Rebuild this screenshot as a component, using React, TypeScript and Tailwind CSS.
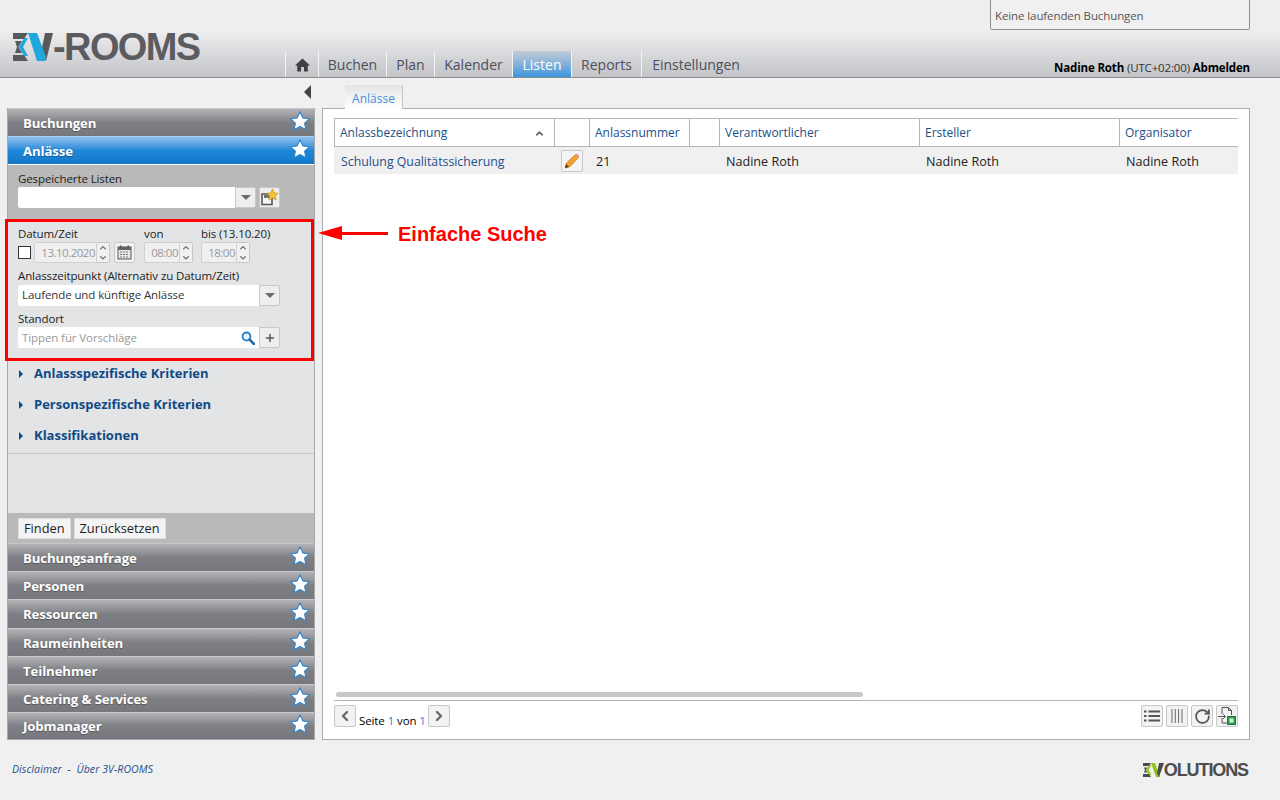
import React from 'react';
import { Plus, ChevronLeft, ChevronRight, ChevronUp, ChevronDown, RotateCw } from 'lucide-react';

const navItems = [
  { label: 'Buchen', w: 'w-[68px]' },
  { label: 'Plan', w: 'w-[48px]' },
  { label: 'Kalender', w: 'w-[78px]' },
  { label: 'Listen', w: 'w-[59px]' },
  { label: 'Reports', w: 'w-[70px]' },
  { label: 'Einstellungen', w: 'w-[108px]' },
];
const lowerPanels = [
  { title: 'Buchungsanfrage', h: 'h-[28px]' },
  { title: 'Personen', h: 'h-[28px]' },
  { title: 'Ressourcen', h: 'h-[29px]' },
  { title: 'Raumeinheiten', h: 'h-[28px]' },
  { title: 'Teilnehmer', h: 'h-[28px]' },
  { title: 'Catering & Services', h: 'h-[28px]' },
  { title: 'Jobmanager', h: 'h-[27px]' },
];
const criteria = ['Anlassspezifische Kriterien', 'Personspezifische Kriterien', 'Klassifikationen'];
const columns = [
  { label: 'Anlassbezeichnung', w: 'w-[220px]' },
  { label: '', w: 'w-[35px]' },
  { label: 'Anlassnummer', w: 'w-[100px]' },
  { label: '', w: 'w-[30px]' },
  { label: 'Verantwortlicher', w: 'w-[200px]' },
  { label: 'Ersteller', w: 'w-[200px]' },
  { label: 'Organisator', w: 'w-[119px]' },
];

function Star() {
  return (
    <svg width="20" height="20" viewBox="0 0 20 20" className="shrink-0 -mt-[4px]">
      <polygon
        points="10,0.8 12.9,6.9 19.4,7.7 14.6,12.2 15.9,18.8 10,15.6 4.1,18.8 5.4,12.2 0.6,7.7 7.1,6.9"
        fill="#ffffff"
        stroke="#2f86cc"
        strokeWidth="1.1"
        strokeLinejoin="round"
      />
    </svg>
  );
}

function PanelHeader({ title, active, h = 'h-[28px]' }: { title: string; active?: boolean; h?: string }) {
  return (
    <div
      className={`${h} flex items-center justify-between pl-[15px] pr-[4px] border-t font-bold text-[13.2px] text-white ${
        active
          ? 'border-[#a8d0f0] bg-gradient-to-b from-[#8cc0ee] via-[#1e88d8] to-[#1478c8]'
          : 'border-[#c8c8cc] bg-gradient-to-b from-[#b4b4b8] via-[#7e7f84] to-[#77787d]'
      }`}
    >
      <span className="mt-[2px] [text-shadow:0_1px_1px_rgba(0,0,0,0.3)]">{title}</span>
      <Star />
    </div>
  );
}

function Caret() {
  return <span className="w-0 h-0 border-x-[5px] border-x-transparent border-t-[5px] border-t-[#6b6b6b]" />;
}

function SquareButton({ children, className = 'w-[22px] h-[22px]' }: { children?: React.ReactNode; className?: string }) {
  return (
    <div className={`flex items-center justify-center bg-[#f2f2f2] border border-[#c8c8c8] rounded-[2px] shrink-0 ${className}`}>
      {children}
    </div>
  );
}

function TimeField({ value, inputWidth }: { value: string; inputWidth: string }) {
  return (
    <div className="flex h-[21px]">
      <div className={`${inputWidth} bg-[#f0f0f1] border border-[#d0d0d0] rounded-l-[2px] text-right pr-[1px] text-[#999] text-[11.5px] tracking-[-0.5px] leading-[19px]`}>
        {value}
      </div>
      <div className="w-[13px] bg-[#f0f0f1] border border-l-0 border-[#c8c8c8] rounded-r-[2px] flex flex-col items-center justify-center text-[#666]">
        <ChevronUp size={10} strokeWidth={3} />
        <ChevronDown size={10} strokeWidth={3} />
      </div>
    </div>
  );
}

function Logo() {
  return (
    <div className="flex items-center h-[28px]">
      <svg width="40" height="28" viewBox="0 0 40 28" className="shrink-0">
        <polygon points="0,0 15,0 11,6 0,6" fill="#58595b" />
        <polygon points="0,22 11,22 15,28 0,28" fill="#58595b" />
        <polygon points="2,8 9,8 5.5,14 9,20 2,20 4,14" fill="#58595b" />
        <polygon points="11,5 15,5 10,14 15,23 11,23 6,14" fill="#1fa7e0" />
        <polygon points="32,0 40,0 33,28 28,20" fill="#58595b" />
        <polygon points="15,0 24,0 33,24 32,28 24,28" fill="#1fa7e0" />
      </svg>
      <span className="font-['Liberation_Sans',sans-serif] font-bold text-[38px] leading-none tracking-[-1.6px] text-[#5b5c60]">-ROOMS</span>
    </div>
  );
}

export default function App() {
  return (
    <div className="relative w-[1280px] h-[800px] overflow-hidden bg-[#f0f0f0] font-['Open_Sans',sans-serif] text-[11.5px] tracking-[-0.1px] text-[#222]">
      {/* running bookings box */}
      <div className="absolute left-[990px] top-0 w-[260px] h-[30px] bg-[#f0f0f0] border border-t-0 border-[#909090] rounded-b-[2px] pl-1 pt-[8px] text-[#555] leading-4 z-10">
        Keine laufenden Buchungen
      </div>

      {/* Header */}
      <header className="h-[78px] border-b border-[#8c8c8c] bg-gradient-to-b from-[#eeeef0] via-[#eeeef0] via-40% to-[#c3c4c8] flex items-end justify-between pr-[30px]">
        <div className="flex items-end h-full">
          <div className="w-[285px] pl-[13px] pb-[16px]">
            <Logo />
          </div>
          <nav className="flex h-[26px] text-[14px] tracking-normal text-[#4c4f5c]">
            <div className="w-[34px] border-x border-[#f4f4f4] flex items-center justify-center">
              <svg width="15" height="14" viewBox="0 0 15 14" className="mt-[2px]">
                <path d="M7.5 0.5 L15 7.5 H12.8 V13.5 H9 V9 H6 V13.5 H2.2 V7.5 H0 Z" fill="#404040" />
              </svg>
            </div>
            {navItems.map((item) => (
              <div
                key={item.label}
                className={`${item.w} pt-[1px] flex items-center justify-center ${item.label === 'Einstellungen' ? '' : 'border-r border-[#f4f4f4]'} ${
                  item.label === 'Listen' ? 'bg-gradient-to-b from-[#c2ccd6] to-[#3a94dc] text-white' : ''
                }`}
              >
                {item.label}
              </div>
            ))}
          </nav>
        </div>
        <div className="pb-[1px] text-[11.5px] tracking-[-0.15px] leading-[16px] text-black whitespace-nowrap">
          <b>Nadine Roth</b> <span className="text-[#333]">(UTC+02:00)</span> <b>Abmelden</b>
        </div>
      </header>

      {/* Main */}
      <div className="flex pl-[7px] h-[662px]">
        {/* Sidebar */}
        <div className="w-[308px] pt-[30px] flex flex-col shrink-0">
          <div className="border border-[#a8a8a8] border-t-0 flex flex-col">
            <PanelHeader title="Buchungen" />
            <PanelHeader title="Anlässe" active />
            <div className="h-[55px] bg-[#b9b9b9] border-t border-white px-[10px] pt-[6px]">
              <div className="leading-[16px]">Gespeicherte Listen</div>
              <div className="flex h-[21px]">
                <div className="w-[217px] bg-white rounded-l-[2px]" />
                <div className="w-[21px] bg-[#eeeeee] border border-[#c8c8c8] flex items-center justify-center rounded-r-[2px]">
                  <Caret />
                </div>
                <div className="w-[21px] ml-[3px] bg-[#eeeeee] border border-[#c8c8c8] rounded-[2px] flex items-center justify-center">
                  <svg width="19" height="19" viewBox="0 0 19 19">
                    <path d="M2 6 H8 V9 H12 V16.5 H2 Z" fill="#f5f5f5" stroke="#555" strokeWidth="1.6" />
                    <rect x="4" y="6" width="3.5" height="4" fill="#777" />
                    <polygon points="12.5,1 14.3,4.8 18.3,5.3 15.4,8 16.2,12 12.5,10 8.8,12 9.6,8 6.7,5.3 10.7,4.8" fill="#f4c430" stroke="#b48a10" strokeWidth="0.6" />
                  </svg>
                </div>
              </div>
            </div>

            <div className="h-[294px] bg-[#e3e4e6] flex flex-col">
              <div className="px-[10px] pt-[7px] h-[235px] border-b border-[#c9c9cc]">
                <div className="flex leading-[16px]">
                  <span className="w-[126px]">Datum/Zeit</span>
                  <span className="w-[57px]">von</span>
                  <span>bis (13.10.20)</span>
                </div>
                <div className="flex items-center">
                  <div className="w-[13px] h-[13px] bg-white border border-[#333] mr-[3px] shrink-0" />
                  <TimeField value="13.10.2020" inputWidth="w-[63px]" />
                  <SquareButton className="ml-[4px] w-[21px] h-[21px]">
                    <svg width="15" height="15" viewBox="0 0 15 15">
                      <rect x="1" y="2" width="13" height="12" fill="#e8e8e8" stroke="#555" />
                      <rect x="1" y="2" width="13" height="3" fill="#666" />
                      <rect x="3" y="0.5" width="1.5" height="3" fill="#555" />
                      <rect x="10.5" y="0.5" width="1.5" height="3" fill="#555" />
                      <path d="M3 7 H12 M3 9.5 H12 M3 12 H12" stroke="#777" strokeWidth="1.2" strokeDasharray="2 1" />
                    </svg>
                  </SquareButton>
                  <div className="ml-[9px]"><TimeField value="08:00" inputWidth="w-[36px]" /></div>
                  <div className="ml-[8px]"><TimeField value="18:00" inputWidth="w-[36px]" /></div>
                </div>

                <div className="mt-[5px] leading-[16px]">Anlasszeitpunkt (Alternativ zu Datum/Zeit)</div>
                <div className="flex h-[21px] w-[262px] mt-[1px]">
                  <div className="flex-1 bg-white rounded-l-[2px] pl-1 text-[11.5px] leading-[20px] text-[#333]">Laufende und künftige Anlässe</div>
                  <div className="w-[21px] bg-[#eeeeee] border border-[#c8c8c8] rounded-r-[2px] flex items-center justify-center">
                    <Caret />
                  </div>
                </div>

                <div className="mt-[5px] leading-[16px]">Standort</div>
                <div className="flex h-[21px] w-[262px]">
                  <div className="flex-1 bg-white rounded-l-[2px] pl-1 pr-[4px] flex items-center justify-between text-[#999]">
                    Tippen für Vorschläge
                    <svg width="14" height="14" viewBox="0 0 14 14">
                      <circle cx="5.5" cy="5.5" r="4" fill="#e8f2fa" stroke="#2a7fc0" strokeWidth="1.8" />
                      <path d="M8.6 8.6 L13 13" stroke="#1f6aa8" strokeWidth="2.6" strokeLinecap="round" />
                    </svg>
                  </div>
                  <div className="w-[21px] bg-[#eeeeee] border border-[#c8c8c8] rounded-r-[2px] flex items-center justify-center text-[#555]">
                    <Plus size={12} strokeWidth={3} />
                  </div>
                </div>

                <div className="mt-[17px] flex flex-col gap-[13px]">
                  {criteria.map((c) => (
                    <div key={c} className="flex items-center h-[18px] pl-[1px] font-bold text-[13px] tracking-normal text-[#0f4a85]">
                      <span className="w-0 h-0 border-y-[4px] border-y-transparent border-l-[4px] border-l-[#0f4a85] mr-[11px] -mt-[1px]" />
                      {c}
                    </div>
                  ))}
                </div>
              </div>
            </div>

            <div className="h-[30px] bg-[#b9b9b9] px-[10px] pt-[1px] flex items-center gap-[3px] text-[12.8px] tracking-normal text-[#222]">
              <div className="h-[21px] px-[5px] bg-[#f4f4f4] border border-[#dedede] leading-[19px]">Finden</div>
              <div className="h-[21px] px-[5px] bg-[#f4f4f4] border border-[#dedede] leading-[19px]">Zurücksetzen</div>
            </div>
            {lowerPanels.map((p) => (
              <PanelHeader key={p.title} title={p.title} h={p.h} />
            ))}
          </div>
        </div>

        {/* Collapse arrow + content */}
        <div className="w-[935px] ml-[7px] flex flex-col">
          <div className="h-[30px] relative flex items-start pl-[23px] pt-[7px]">
            <span className="absolute left-[-18px] top-[7px] w-0 h-0 border-y-[7px] border-y-transparent border-r-[7px] border-r-[#444]" />
            <div className="w-[58px] h-[24px] bg-gradient-to-b from-[#e4e4e4] to-white border-r border-[#c4c4c4] text-center text-[12px] tracking-normal leading-[27px] text-[#3f8fdc] relative z-10">
              Anlässe
            </div>
          </div>
          <div className="w-[928px] h-[632px] bg-white border border-[#a9a9ae] px-[11px] pt-[9px] flex flex-col">
            {/* Table */}
            <div className="flex h-[29px] border-y border-l border-[#b4b4bc] text-[12px] tracking-normal text-[#1c4f8a] overflow-hidden">
              {columns.map((col, i) => (
                <div key={i} className={`${col.w} shrink-0 h-full pt-[1px] border-r border-[#b4b4bc] last:border-r-0 pl-[5px] flex items-center justify-between pr-[9px]`}>
                  {col.label}
                  {i === 0 && <ChevronUp size={11} strokeWidth={3.5} className="text-[#666]" />}
                </div>
              ))}
            </div>
            <div className="flex h-[27px] bg-[#f0f0f0] items-center text-[12.6px] tracking-normal text-[#222]">
              <div className="w-[220px] pl-[7px] pt-[3px] text-[12.3px] text-[#1c4f8a]">Schulung Qualitätssicherung</div>
              <div className="w-[35px] pl-[7px]">
                <div className="w-[22px] h-[22px] bg-[#f4f4f4] border border-[#c8c8c8] rounded-[2px] flex items-center justify-center">
                  <svg width="16" height="16" viewBox="0 0 16 16">
                    <polygon points="1,15 2.5,10 11.5,1.5 14.5,4.5 6,13.5" fill="#f2a32e" stroke="#c87a10" strokeWidth="0.8" />
                    <polygon points="11.5,1.5 13,0.5 15.5,3 14.5,4.5" fill="#e89ab0" />
                    <polygon points="1,15 2.2,11 5,14" fill="#5a4020" />
                  </svg>
                </div>
              </div>
              <div className="w-[130px] pl-[7px] pt-[3px]">21</div>
              <div className="w-[200px] pl-[7px] pt-[3px]">Nadine Roth</div>
              <div className="w-[200px] pl-[7px] pt-[3px]">Nadine Roth</div>
              <div className="pl-[7px] pt-[3px]">Nadine Roth</div>
            </div>

            <div className="flex-1 flex flex-col justify-end">
              <div className="h-[5px] w-[527px] ml-[2px] rounded-full bg-[#c8c8c8]" />
              <div className="h-[39px] mt-[3px] border-t border-[#b4b4bc] flex justify-between pt-[4px]">
                <div className="flex items-start text-black">
                  <SquareButton><ChevronLeft size={16} strokeWidth={3.5} className="text-[#666]" /></SquareButton>
                  <span className="ml-[3px] mr-[2px] mt-[8px] leading-[16px] whitespace-nowrap">
                    Seite <span className="text-[#2f7fd0]">1</span> von <span className="text-[#2f7fd0]">1</span>
                  </span>
                  <SquareButton><ChevronRight size={16} strokeWidth={3.5} className="text-[#666]" /></SquareButton>
                </div>
                <div className="flex gap-[3px]">
                  <SquareButton>
                    <svg width="16" height="12" viewBox="0 0 16 12">
                      <path d="M0 1.5 H2.5 M4.5 1.5 H16 M0 6 H2.5 M4.5 6 H16 M0 10.5 H2.5 M4.5 10.5 H16" stroke="#555" strokeWidth="2" />
                    </svg>
                  </SquareButton>
                  <SquareButton>
                    <svg width="12" height="14" viewBox="0 0 12 14">
                      <path d="M1 0 V14 M4.3 0 V14 M7.6 0 V14 M11 0 V14" stroke="#666" strokeWidth="1" />
                    </svg>
                  </SquareButton>
                  <SquareButton>
                    <RotateCw size={17} strokeWidth={2.5} className="text-[#555]" />
                  </SquareButton>
                  <SquareButton>
                    <svg width="18" height="18" viewBox="0 0 18 18">
                      <path d="M4 7 V0.5 H10.5 L13.5 3.5 V8 M10.5 0.5 V3.5 H13.5 M4 11 V16 H9" fill="none" stroke="#555" />
                      <path d="M0 9.5 H7 M5 7 L7.5 9.5 L5 12" fill="none" stroke="#555" />
                      <rect x="9.5" y="9.5" width="8" height="8" fill="#2e9e4f" stroke="#1d7a3a" />
                      <rect x="11.5" y="11.5" width="4" height="4" fill="#d8f0dc" />
                    </svg>
                  </SquareButton>
                </div>
              </div>
            </div>
          </div>
        </div>
      </div>

      {/* Footer */}
      <footer className="flex items-center justify-between pl-[12px] pr-[32px] h-[60px]">
        <div className="italic text-[10.5px] tracking-[0.1px] text-[#1c4f8a]">Disclaimer&nbsp; -&nbsp; Über 3V-ROOMS</div>
        <div className="flex items-center">
          <svg width="21" height="14" viewBox="0 0 21 14" className="shrink-0">
            <polygon points="0,0 8,0 6,3 0,3" fill="#4a4a4a" />
            <polygon points="0,11 6,11 8,14 0,14" fill="#4a4a4a" />
            <polygon points="1,4.5 4,4.5 3,7 4,9.5 1,9.5 2,7" fill="#4a4a4a" />
            <polygon points="6,2 8.5,2 5.5,7 8.5,12 6,12 3,7" fill="#8fc31f" />
            <polygon points="8,0 12,0 17,14 13,14" fill="#8fc31f" />
            <polygon points="16,0 21,0 16,14 14,10" fill="#4a4a4a" />
          </svg>
          <span className="font-['Liberation_Sans',sans-serif] font-bold text-[18px] leading-none tracking-[-1.1px] text-[#4d4d4f]">OLUTIONS</span>
        </div>
      </footer>

      {/* Annotation over the screenshot */}
      <div className="absolute left-[5px] top-[219px] w-[309px] h-[142px] border-[3px] border-[#ff0000] pointer-events-none" />
      <div className="absolute left-[318px] top-[224px] flex items-center h-[18px]">
        <span className="w-0 h-0 border-y-[7px] border-y-transparent border-r-[24px] border-r-[#ff0000]" />
        <span className="w-[46px] h-[3px] bg-[#ff0000]" />
      </div>
      <div className="absolute left-[398px] top-[222px] font-['Liberation_Sans',sans-serif] font-bold text-[20px] tracking-normal leading-6 text-[#ff0000]">
        Einfache Suche
      </div>
    </div>
  );
}
